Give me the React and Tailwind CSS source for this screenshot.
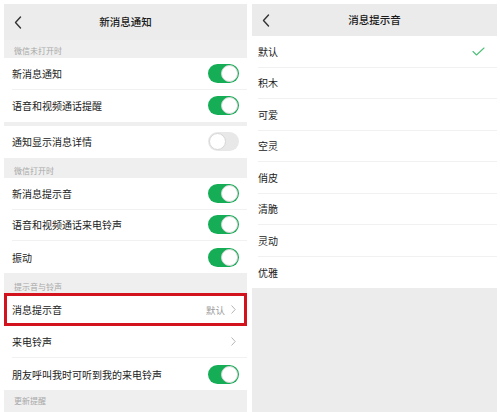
import React from "react";

const font = { fontFamily: '"Noto Sans CJK SC", "Noto Sans", sans-serif' };

function Toggle({ on }) {
  return (
    <div
      className={`flex h-[19px] w-[31px] items-center rounded-full p-[1px] ${
        on ? "justify-end bg-[#15ad56]" : "justify-start bg-[#e8e8e8]"
      }`}
    >
      <div className="h-[17px] w-[17px] rounded-full border border-[#d6d6d6] bg-white" />
    </div>
  );
}

function Back() {
  return (
    <svg width="8" height="13" viewBox="0 0 8 13" fill="none">
      <path d="M6.5 1 L1.5 6.5 L6.5 12" stroke="#333" strokeWidth="1.4" strokeLinecap="round" strokeLinejoin="round" />
    </svg>
  );
}

function Chevron() {
  return (
    <svg width="5" height="9" viewBox="0 0 5 9" fill="none">
      <path d="M0.8 0.8 L4.2 4.5 L0.8 8.2" stroke="#b5b5b5" strokeWidth="1" strokeLinecap="round" strokeLinejoin="round" />
    </svg>
  );
}

function Label({ children, h = "h-[18px]" }) {
  return (
    <div className={`flex ${h} items-end pb-[3px] pl-[10px] text-[8px] leading-[8px] text-[#a8a8a8]`}>
      {children}
    </div>
  );
}

function Row({ children, right, last }) {
  return (
    <div className="flex h-[32px] items-center bg-white pl-[8px]">
      <div
        className={`flex h-full flex-1 items-center justify-between pr-[8px] ${
          last ? "" : "border-b border-[#f1f1f1]"
        }`}
      >
        <span className="text-[10px] text-[#222]">{children}</span>
        {right}
      </div>
    </div>
  );
}

const sounds = ["默认", "积木", "可爱", "空灵", "俏皮", "清脆", "灵动", "优雅"];

export default function App() {
  return (
    <div className="flex h-[412px] w-[500px] gap-[5px] overflow-hidden bg-white pl-[4px] pt-[4px]" style={font}>
      <div className="flex w-[243px] flex-col bg-[#efefef]">
        <div className="relative flex h-[36px] shrink-0 items-center justify-center bg-[#ececec]">
          <div className="absolute left-[10px] top-[12px]">
            <Back />
          </div>
          <span className="text-[10.5px] font-medium text-[#1a1a1a]">新消息通知</span>
        </div>
        <Label>微信未打开时</Label>
        <Row right={<Toggle on />}>新消息通知</Row>
        <Row right={<Toggle on />} last>语音和视频通话提醒</Row>
        <div className="h-[4px] shrink-0" />
        <Row right={<Toggle />} last>通知显示消息详情</Row>
        <Label h="h-[20px]">微信打开时</Label>
        <Row right={<Toggle on />}>新消息提示音</Row>
        <Row right={<Toggle on />}>语音和视频通话来电铃声</Row>
        <Row right={<Toggle on />} last>振动</Row>
        <Label h="h-[21px]">提示音与铃声</Label>
        <div className="relative">
          <Row
            right={
              <div className="flex items-center gap-[6px] pr-[3px]">
                <span className="text-[9.5px] text-[#9a9a9a]">默认</span>
                <Chevron />
              </div>
            }
          >
            消息提示音
          </Row>
          <div className="pointer-events-none absolute inset-x-0 -top-[1px] bottom-0 border-[3px] border-[#d2121c]" />
        </div>
        <Row
          right={
            <div className="pr-[3px]">
              <Chevron />
            </div>
          }
        >
          来电铃声
        </Row>
        <Row right={<Toggle on />} last>朋友呼叫我时可听到我的来电铃声</Row>
        <div className="flex h-[22px] items-center pl-[10px] text-[8px] text-[#a8a8a8]">更新提醒</div>
      </div>

      <div className="flex w-[245px] flex-col bg-[#ececec]">
        <div className="relative flex h-[32px] shrink-0 items-center justify-center bg-[#ebebeb]">
          <div className="absolute left-[10px] top-[10px]">
            <Back />
          </div>
          <span className="text-[10.5px] font-medium text-[#1a1a1a]">消息提示音</span>
        </div>
        {sounds.map((s, i) => (
          <div key={s} className="flex h-[31.5px] items-center bg-white pl-[6px]">
            <div
              className={`flex h-full flex-1 items-center justify-between pr-[12px] ${
                i < sounds.length - 1 ? "border-b border-[#f1f1f1]" : ""
              }`}
            >
              <span className="text-[10px] text-[#222]">{s}</span>
              {i === 0 && (
                <svg width="13" height="9" viewBox="0 0 13 9" fill="none">
                  <path d="M1 4.5 L4.5 8 L12 1" stroke="#4fbf7a" strokeWidth="1.1" strokeLinecap="round" strokeLinejoin="round" />
                </svg>
              )}
            </div>
          </div>
        ))}
      </div>
    </div>
  );
}
